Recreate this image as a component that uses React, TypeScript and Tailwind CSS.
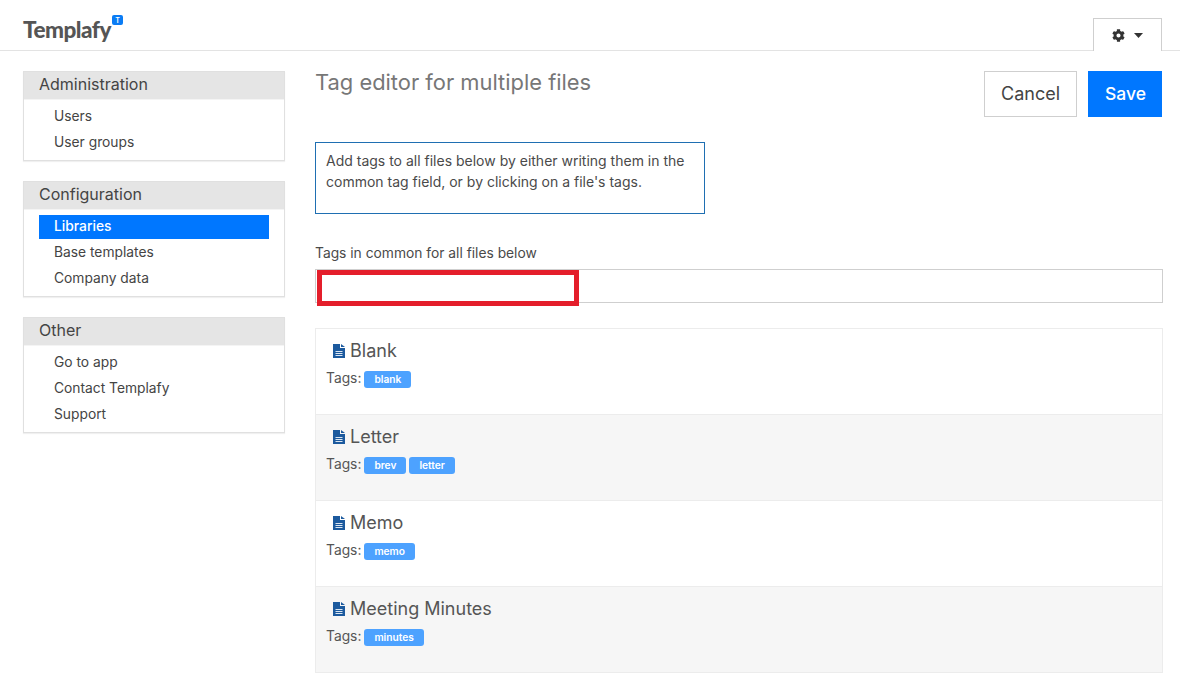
import React from 'react';
import { FaCog } from 'react-icons/fa';

const sections = [
  { title: 'Administration', items: ['Users', 'User groups'] },
  { title: 'Configuration', items: ['Libraries', 'Base templates', 'Company data'] },
  { title: 'Other', items: ['Go to app', 'Contact Templafy', 'Support'] },
];

const files = [
  { name: 'Blank', tags: ['blank'] },
  { name: 'Letter', tags: ['brev', 'letter'] },
  { name: 'Memo', tags: ['memo'] },
  { name: 'Meeting Minutes', tags: ['minutes'] },
];

const FileIcon = () => (
  <svg viewBox="0 0 12 14" className="mr-[5px] h-[14px] w-[12px] shrink-0">
    <path d="M0 0h7v4h5v10H0z" fill="#1c5a9e" />
    <path d="M8 0l4 3H8z" fill="#1c5a9e" />
    <path d="M2.5 7h7v1h-7zM2.5 9h7v1h-7zM2.5 11h7v1h-7z" fill="#dbe6f2" />
  </svg>
);

const App: React.FC = () => {
  return (
    <div className="h-[680px] w-[1180px] overflow-hidden bg-white font-['Inter',sans-serif] text-[#4a4a4a]">
      <header className="flex h-[51px] items-end justify-between border-b border-[#e3e3e3] pl-[23px] pr-[18px]">
        <div className="relative mb-[6px] font-['Lato',sans-serif] text-[22.5px] font-black leading-[28px] tracking-[-0.5px] text-[#555]">
          Templafy
          <span className="absolute left-[89px] top-[-1px] flex h-[10px] w-[11px] items-center justify-center rounded-[2px] bg-[#0a7cf5] text-[7px] font-bold leading-none tracking-normal text-white">
            T
          </span>
        </div>
        <div className="mb-[-1px] flex h-[33px] w-[69px] items-center justify-center gap-[9px] border border-b-0 border-[#cfcfcf] bg-white text-[#333]">
          <FaCog className="text-[13px]" />
          <svg viewBox="0 0 9 5" className="h-[5px] w-[9px]">
            <path d="M0 0h9L4.5 5z" fill="#333" />
          </svg>
        </div>
      </header>

      <div className="flex gap-[30px] pl-[23px] pr-[18px] pt-[20px]">
        <aside className="flex w-[262px] shrink-0 flex-col gap-[20px]">
          {sections.map((section) => (
            <div key={section.title} className="border border-[#e0e0e0] shadow-[0_1px_1px_rgba(0,0,0,0.06)]">
              <div className="h-[27px] bg-[#e5e5e5] pl-[15px] text-[16px] leading-[25px] text-[#444]">{section.title}</div>
              <ul className="border-t border-[#f4f4f4] px-[15px] pb-[5px] pt-[3px]">
                {section.items.map((item) =>
                  item === 'Libraries' ? (
                    <li key={item} className="mt-[2px] h-[24px] bg-[#0077ff] pl-[15px] text-[13.8px] font-medium leading-[22px] text-white">
                      {item}
                    </li>
                  ) : (
                    <li key={item} className="mt-[2px] h-[24px] pl-[15px] text-[13.8px] leading-[22px] text-[#444]">
                      {item}
                    </li>
                  ),
                )}
              </ul>
            </div>
          ))}
        </aside>

        <main className="min-w-0 flex-1">
          <div className="flex items-start justify-between">
            <h1 className="text-[21.9px] font-normal leading-[22px] text-[#777]">Tag editor for multiple files</h1>
            <div className="flex gap-[11px]">
              <button className="h-[46px] w-[93px] border border-[#cfcfcf] bg-white pb-[2px] text-[18px] text-[#444]">Cancel</button>
              <button className="h-[46px] w-[74px] bg-[#0077ff] pl-[1px] text-[17.5px] font-medium text-white">Save</button>
            </div>
          </div>

          <div className="mt-[25px] h-[72px] w-[390px] border border-[#1f6fb2] px-[10px] pt-[7px] text-[14px] leading-[21px] text-[#4a4a4a]">
            Add tags to all files below by either writing them in the common tag field, or by clicking on a file's tags.
          </div>

          <label className="mt-[29px] block text-[13.8px] leading-[20px] text-[#4a4a4a]">Tags in common for all files below</label>
          <div className="relative mr-[-1px] mt-[6px] h-[34px] border border-[#cfcfcf] bg-white">
            <div className="absolute left-[1px] top-0 h-[36px] w-[262px] border-[5px] border-[#e41e2b]"></div>
          </div>

          <div className="mr-[-1px] mt-[25px] border-x border-b border-[#ececec]">
            {files.map((file, i) => (
              <div key={file.name} className={`h-[86px] border-t border-[#ececec] pl-[10px] pt-[10px] ${i % 2 === 1 ? 'bg-[#f6f6f6]' : 'bg-white'}`}>
                <div className="flex items-center pl-[7px] text-[18px] leading-[24px] text-[#555]">
                  <FileIcon />
                  {file.name}
                </div>
                <div className="mt-[5px] flex items-center text-[13.8px] leading-[20px] text-[#555]">
                  <span className="mr-[3px]">Tags:</span>
                  {file.tags.map((tag) => (
                    <span key={tag} className="mr-[3px] mt-[3px] rounded-[3px] bg-[#4da2ff] px-[10px] text-[10.2px] font-semibold leading-[17px] text-white">
                      {tag}
                    </span>
                  ))}
                </div>
              </div>
            ))}
          </div>
        </main>
      </div>
    </div>
  );
};

export default App;
